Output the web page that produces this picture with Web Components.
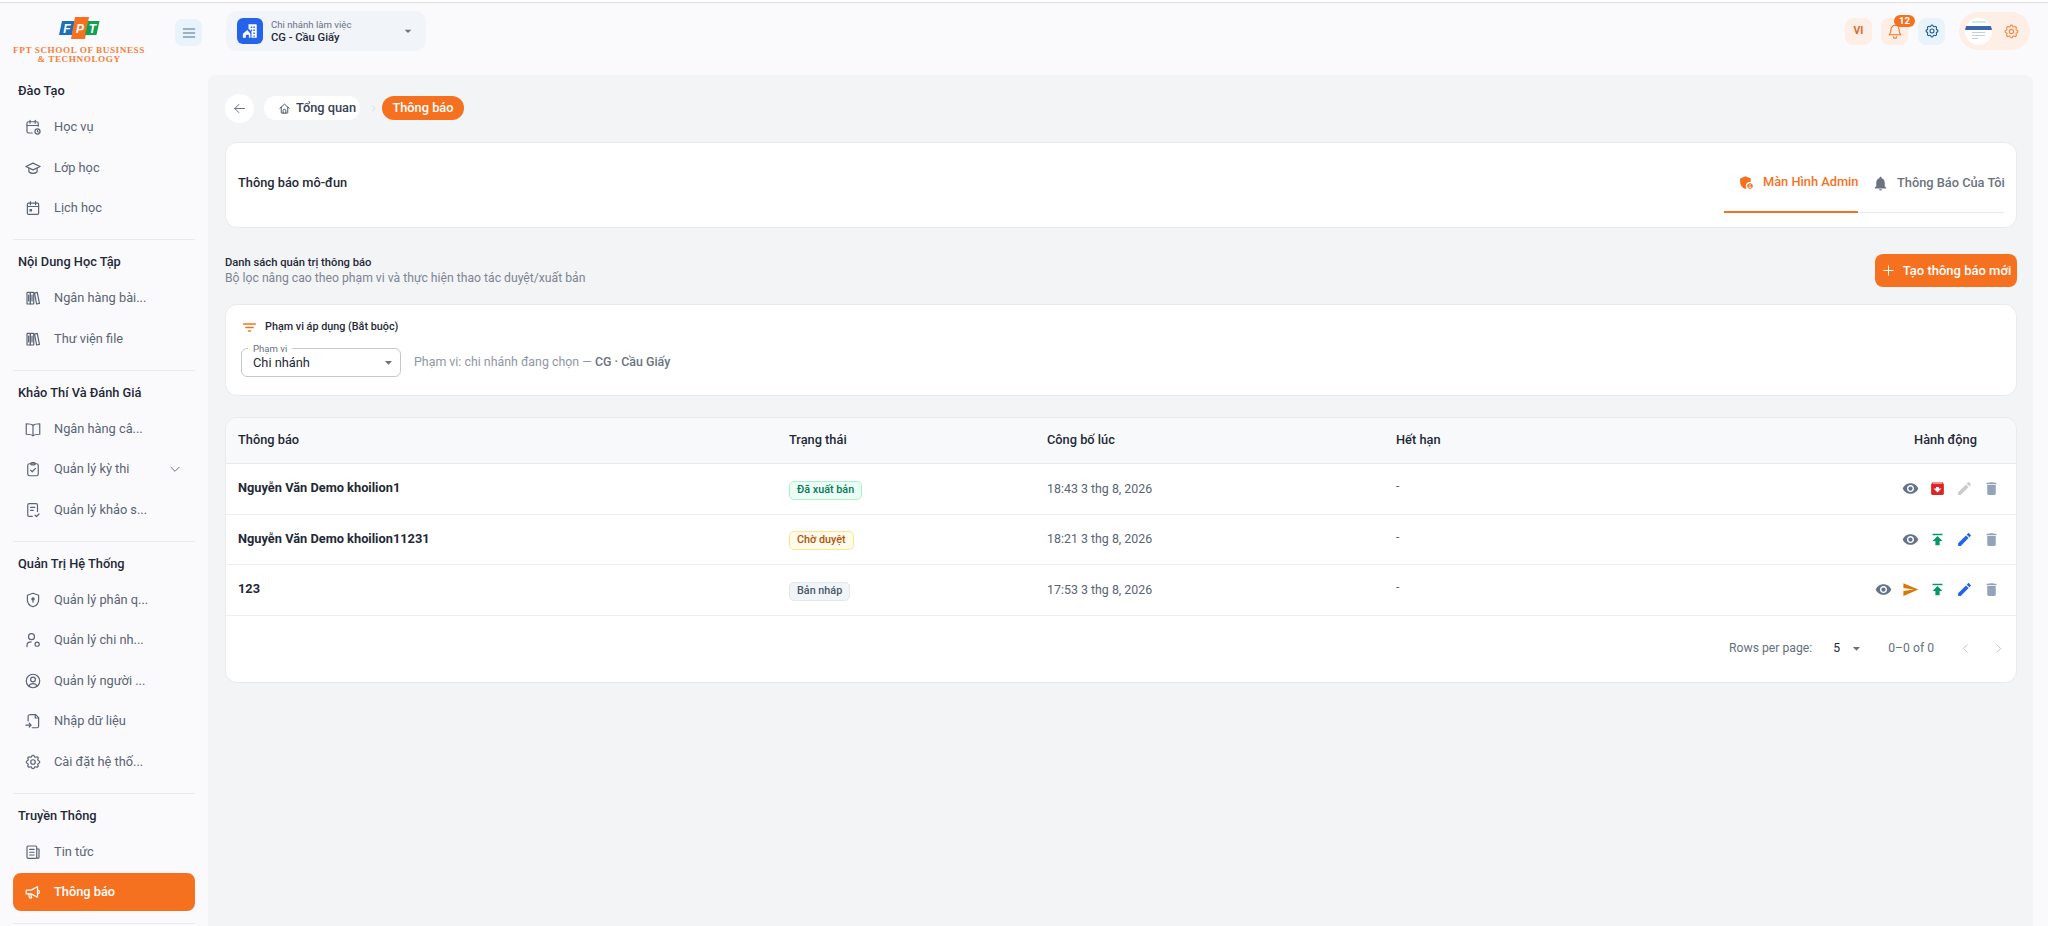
<!DOCTYPE html>
<html lang="vi"><head><meta charset="utf-8"><title>Thông báo</title>
<style>
html,body{margin:0;padding:0;height:926px;overflow:hidden;background:#fafafd;font-family:Roboto,"Noto Sans",sans-serif;color:#111827}
</style></head><body>
<x-app></x-app>
<script>
const S=(inner,extra='')=>`<svg viewBox="0 0 24 24" fill="none" stroke="currentColor" stroke-width="1.6" stroke-linecap="round" stroke-linejoin="round" ${extra}>${inner}</svg>`;
const F=(d)=>`<svg viewBox="0 0 24 24" fill="currentColor"><path d="${d}"/></svg>`;
const GEAR='<path d="M10.325 4.317c.426-1.756 2.924-1.756 3.35 0a1.724 1.724 0 0 0 2.573 1.066c1.543-.94 3.31.826 2.37 2.37a1.724 1.724 0 0 0 1.065 2.572c1.756.426 1.756 2.924 0 3.35a1.724 1.724 0 0 0-1.066 2.573c.94 1.543-.826 3.31-2.37 2.37a1.724 1.724 0 0 0-2.572 1.065c-.426 1.756-2.924 1.756-3.35 0a1.724 1.724 0 0 0-2.573-1.066c-1.543.94-3.31-.826-2.37-2.37a1.724 1.724 0 0 0-1.065-2.572c-1.756-.426-1.756-2.924 0-3.35a1.724 1.724 0 0 0 1.066-2.573c-.94-1.543.826-3.31 2.37-2.37.996.608 2.296.07 2.572-1.065z"/><circle cx="12" cy="12" r="3"/>';
const ICONS={
 calclock:S('<path d="M11 20H6a2 2 0 0 1-2-2V7a2 2 0 0 1 2-2h11a2 2 0 0 1 2 2v4"/><path d="M8 3v4M15 3v4M4 10h15"/><circle cx="18" cy="18" r="3.4"/><path d="M18 16.6V18l1 .7"/>'),
 grad:S('<path d="M2.5 10 12 5.5l9.5 4.5-9.5 4.5z"/><path d="M6.5 12.2V17c1.4 1.5 3.4 2.2 5.5 2.2s4.1-.7 5.5-2.2v-4.8"/>'),
 cal:S('<rect x="4.5" y="5.5" width="15" height="15" rx="1.6"/><path d="M8.5 3.5v4M15.5 3.5v4M4.5 10h15"/><rect x="8" y="14" width="2" height="2" fill="currentColor"/>'),
 books:S('<rect x="4" y="4.5" width="4.5" height="15.5" rx=".8"/><rect x="8.5" y="4.5" width="4.5" height="15.5" rx=".8"/><path d="M14 5.5l3.6-1 3 14.6-3.8.9z"/><path d="M6.2 8v8M10.7 8v8"/>'),
 book:S('<path d="M12 7c-1.6-1.3-4-2-9-2v14c5 0 7.4.6 9 2 1.6-1.4 4-2 9-2V5c-5 0-7.4.7-9 2z"/><path d="M12 7v14"/>'),
 clip:S('<rect x="5" y="5" width="14" height="16" rx="2.2"/><path d="M9 5a1.6 1.6 0 0 1 1.6-1.7h2.8A1.6 1.6 0 0 1 15 5a1.4 1.4 0 0 1-1.4 1.4h-3.2A1.4 1.4 0 0 1 9 5z"/><path d="m8.8 13.5 2.2 2.2 4.2-4.6"/>'),
 filecheck:S('<path d="M11 20.5H7a2 2 0 0 1-2-2v-13a2 2 0 0 1 2-2h9a2 2 0 0 1 2 2V14"/><path d="M8.8 8.5h5.5M8.8 12.5h3.5"/><path d="m14.8 19 1.8 1.7 3.4-3.4"/>'),
 shield:S('<path d="M12 3 4.5 5.6v6c0 4.4 3 8 7.5 9.4 4.500-1.400 7.500-5 7.500-9.400v-6z"/><circle cx="12" cy="10.500" r="1.500" fill="currentColor"/><path d="M12 12v3"/>'),
 userdot:S('<circle cx="10" cy="7.500" r="4"/><path d="M4 21v-1.500c0-3 2.500-5 5.500-5"/><circle cx="17.500" cy="17.500" r="2.800"/>'),
 usercircle:S('<circle cx="12" cy="12" r="9"/><circle cx="12" cy="10" r="3.200"/><path d="M6.500 18.800c1-2.300 3-3.300 5.500-3.300s4.500 1 5.500 3.300"/>'),
 fileimp:S('<path d="M8 3.500h7.500l4 4V19a2 2 0 0 1-2 2H11"/><path d="M15 3.500V8h4.500"/><path d="M7 3.700A2 2 0 0 0 5.500 5.500V12"/><path d="M2.500 17.500h7M7 15l2.500 2.500L7 20"/>'),
 gear:S(GEAR),
 news:S('<rect x="4" y="4" width="13" height="16.500" rx="1.500"/><path d="M17 8h3v11a1.500 1.500 0 0 1-3 0M7.500 8.500h6M7.500 12.300h6M7.500 16h6"/>'),
 mega:S('<path d="M3 9.500h6.500L18 5v14l-8.500-4.500H3z"/><path d="M6 14.500 7.500 20h2.700L9 14.800"/><path d="M18 9.500a2.500 2.500 0 0 1 0 5"/>'),
 home:S('<path d="M3.500 11.500 12 4l8.500 7.500"/><path d="M6 10v9.500a1 1 0 0 0 1 1h10a1 1 0 0 0 1-1V10"/><path d="M9.500 20.500V16a2.500 2.500 0 0 1 5 0v4.500"/>'),
 back:S('<path d="M20 12H4.500M11 5.500 4.500 12l6.500 6.500"/>'),
 right:S('<path d="m9 5 7 7-7 7"/>'),
 left:S('<path d="m15 5-7 7 7 7"/>'),
 down:S('<path d="m5 9 7 7 7-7"/>'),
 belloutline:S('<path d="M12 3.500a6 6 0 0 1 6 6c0 5 2 7 2.500 8h-17c.5-1 2.500-3 2.500-8a6 6 0 0 1 6-6z"/><path d="M9.500 20.500a2.500 2.500 0 0 0 5 0"/>'),
 menu:S('<path d="M3.500 6h17M3.500 12h17M3.500 18h17"/>'),
 plus:S('<path d="M12 4.500v15M4.500 12h15"/>'),
 bell:F('M12 22c1.100 0 2-.9 2-2h-4c0 1.100.89 2 2 2zm6-6v-5c0-3.070-1.640-5.640-4.500-6.320V4c0-.83-.67-1.500-1.500-1.500s-1.500.67-1.500 1.500v.68C7.630 5.360 6 7.920 6 11v5l-2 2v1h16v-1l-2-2z'),
 admin:F('M17 11c.34 0 .67.04 1 .09V6.270L10.500 3 3 6.270v4.910c0 4.540 3.200 8.790 7.500 9.820.55-.13 1.080-.32 1.600-.55-.69-.98-1.100-2.170-1.100-3.450 0-3.310 2.690-6 6-6zM17 13c-2.210 0-4 1.790-4 4s1.790 4 4 4 4-1.790 4-4-1.790-4-4-4zm0 1.380c.62 0 1.120.51 1.120 1.120s-.51 1.120-1.120 1.120-1.120-.51-1.120-1.120.5-1.120 1.120-1.120zm0 5.370c-.93 0-1.740-.46-2.240-1.170.05-.72 1.510-1.080 2.240-1.080s2.190.36 2.240 1.080c-.5.71-1.310 1.170-2.240 1.170z'),
 filter:F('M10 18h4v-2h-4v2zM3 6v2h18V6H3zm3 7h12v-2H6v2z'),
 eye:F('M12 4.500C7 4.500 2.730 7.610 1 12c1.730 4.390 6 7.500 11 7.500s9.270-3.110 11-7.500c-1.730-4.390-6-7.500-11-7.500zM12 17c-2.760 0-5-2.240-5-5s2.240-5 5-5 5 2.240 5 5-2.240 5-5 5zm0-8c-1.660 0-3 1.340-3 3s1.340 3 3 3 3-1.340 3-3-1.340-3-3-3z'),
 edit:F('M3 17.250V21h3.750L17.810 9.940l-3.750-3.750L3 17.250zM20.710 7.040c.39-.39.39-1.020 0-1.410l-2.340-2.340c-.39-.39-1.020-.39-1.410 0l-1.830 1.830 3.750 3.750 1.830-1.830z'),
 del:F('M6 19c0 1.100.9 2 2 2h8c1.100 0 2-.9 2-2V7H6v12zM19 4h-3.500l-1-1h-5l-1 1H5v2h14V4z'),
 publish:F('M5 4v2h14V4H5zm0 10h4v6h6v-6h4l-7-7-7 7z'),
 send:F('M2.010 21L23 12 2.010 3 2 10l15 2-15 2z'),
 archive:F('M20.540 5.230l-1.390-1.680C18.880 3.210 18.470 3 18 3H6c-.47 0-.88.21-1.160.55L3.460 5.230C3.170 5.570 3 6.020 3 6.500V19c0 1.100.9 2 2 2h14c1.100 0 2-.9 2-2V6.500c0-.48-.17-.93-.46-1.270zM12 17.500L6.500 12H10v-2h4v2h3.500L12 17.500zM5.120 5l.81-1h12.130l.94 1H5.120z'),
 caret:F('M7 10l5 5 5-5z'),
 building:F('M10 3h10a1 1 0 0 1 1 1v17h-7v-8.600L10 9zM13 6v2h2V6zm3.500 0v2h2V6zM13 10v2h2v-2zm3.500 0v2h2v-2zm0 4v2h2v-2zm0 4v1.500h2V18zM8.500 10.500 2.500 15.500V21h4v-4h4v4h2v-5.500z')
};
function def(name,css,html,init){
  customElements.define(name,class extends HTMLElement{
    connectedCallback(){
      if(this.shadowRoot)return;
      const r=this.attachShadow({mode:'open'});
      r.innerHTML=`<style>${css}</style>`+(typeof html==='function'?html(this):html);
      if(init)init(this,r);
    }
  });
}
def('x-icon',':host{display:inline-flex;width:var(--s,18px);height:var(--s,18px);flex:none;color:inherit}svg{width:100%;height:100%;display:block}',e=>ICONS[e.getAttribute('name')]||'');

def('x-logo',`:host{display:flex;flex-direction:column;align-items:center;width:128px}
 svg{display:block;width:42px;height:24px}
 .t{font:700 9.2px/9px "Liberation Serif",serif;letter-spacing:.55px;color:#f5813a;text-align:center;margin-top:6px;white-space:nowrap}`,
 `<svg viewBox="0 0 42 24"><path d="M4 5h13l-3 14H1z" fill="#1c6fb8"/><path d="M17 1h14l-4 22H13z" fill="#f5711f"/><path d="M30 5h11.500l-3 14H27z" fill="#12a150"/>
 <text x="9" y="16.500" font-family="Liberation Sans" font-size="12" font-weight="700" font-style="italic" fill="#fff" text-anchor="middle">F</text>
 <text x="22" y="16.500" font-family="Liberation Sans" font-size="12" font-weight="700" font-style="italic" fill="#fff" text-anchor="middle">P</text>
 <text x="34.500" y="16.500" font-family="Liberation Sans" font-size="12" font-weight="700" font-style="italic" fill="#fff" text-anchor="middle">T</text></svg>
 <div class="t">FPT SCHOOL OF BUSINESS<br>&amp; TECHNOLOGY</div>`);

def('x-nav-group',`:host{display:block;margin:0 13px;padding:12px 0 12px;border-bottom:1px solid #e9eaee}
 h3{margin:0 0 7px;padding-left:5px;font:500 12.800px/20px Roboto,sans-serif;color:#1f2937;white-space:nowrap}
 .l{display:flex;flex-direction:column;gap:2.500px}`,
 e=>`<h3>${e.getAttribute('label')}</h3><div class="l"><slot></slot></div>`);

def('x-nav-item',`:host{display:flex;align-items:center;height:38px;border-radius:8px;color:#5b6473;padding-left:11px;box-sizing:border-box;position:relative;--s:18px;font:400 12.800px/18px Roboto,sans-serif}
 :host([active]){background:#f5711f;color:#fff;font-weight:500}
 .tx{margin-left:12px;white-space:nowrap}
 .c{position:absolute;right:13px;--s:14px;top:12px}`,
 e=>`<x-icon name="${e.getAttribute('icon')}"></x-icon><span class="tx"><slot></slot></span>${e.hasAttribute('expand')?'<x-icon class="c" name="down"></x-icon>':''}`);

def('x-sidebar',`:host{display:block;width:208px;flex:none;overflow:hidden}
 .h{height:66px;box-sizing:border-box;display:flex;padding:13px 6px 0 15px;align-items:flex-start;justify-content:space-between}
 .b{width:27px;height:27px;border-radius:7px;background:#e8f3fb;color:#52708f;display:flex;align-items:center;justify-content:center;--s:16px;margin-top:3px}`,
 `<div class="h"><x-logo></x-logo><div class="b"><x-icon name="menu"></x-icon></div></div><slot></slot>`);

def('x-branch',`:host{display:flex;align-items:center;width:200px;height:40px;border-radius:11px;background:#f1f4f9;box-sizing:border-box;padding:0 11px;position:relative}
 .i{width:26px;height:26px;border-radius:6px;background:#2563eb;color:#fff;display:flex;align-items:center;justify-content:center;--s:18px}
 .t{margin-left:8px;display:flex;flex-direction:column}
 .a{font:400 9.600px/11px Roboto,sans-serif;color:#6b7280}
 .v{font:500 11.200px/13px Roboto,sans-serif;color:#1f2937;margin-top:1px}
 .c{position:absolute;right:10px;top:12px;--s:16px;color:#6b7280}`,
 `<div class="i"><x-icon name="building"></x-icon></div><div class="t"><span class="a">Chi nhánh làm việc</span><span class="v">CG - Cầu Giấy</span></div><x-icon class="c" name="caret"></x-icon>`);

def('x-box-btn',`:host{display:flex;width:27px;height:27px;border-radius:8px;align-items:center;justify-content:center;background:var(--bg,#fdeee6);color:var(--fg,#f5711f);position:relative;--s:16px;font:700 10.400px/1 Roboto,sans-serif}
 .badge{position:absolute;left:13px;top:-3px;height:12px;min-width:21px;border-radius:6px;background:#f5711f;color:#fff;font:700 9.600px/12px Roboto,sans-serif;text-align:center}`,
 e=>`<slot></slot>${e.getAttribute('badge')?`<span class="badge">${e.getAttribute('badge')}</span>`:''}`);

def('x-avatar-pill',`:host{display:flex;align-items:center;width:71px;height:38px;border-radius:19px;background:#fdeee6;box-sizing:border-box;padding-left:6px;color:#f58a47;--s:17px}
 .a{width:27px;height:27px;border-radius:50%;background:#fff;overflow:hidden;display:flex;flex-direction:column;align-items:center;flex:none}
 .g{width:14px;height:2px;background:#cfeedd;margin-top:3px}
 .bl{width:100%;height:4px;background:#3f62ad;margin-top:3px}
 .ln{width:13px;height:1px;background:#c8ccd3;margin-top:2px;align-self:flex-start;margin-left:7px}
 x-icon{margin-left:11px}`,
 `<div class="a"><i class="g"></i><i class="bl"></i><i class="ln"></i><i class="ln"></i><i class="ln" style="width:6px"></i></div><x-icon name="gear"></x-icon>`);

def('x-topbar',`:host{display:flex;align-items:center;height:72px;box-sizing:border-box;padding:0 18px 16px 18px;justify-content:space-between;flex:none}
 .r{display:flex;align-items:center}`,
 `<x-branch></x-branch><div class="r"><x-box-btn style="color:#d9692c">VI</x-box-btn><x-box-btn badge="12" style="margin-left:9px"><x-icon name="belloutline"></x-icon></x-box-btn><x-box-btn style="margin-left:10px;--bg:#e8f3fb;--fg:#1f5a8c"><x-icon name="gear"></x-icon></x-box-btn><x-avatar-pill style="margin-left:14px"></x-avatar-pill></div>`);

def('x-crumbs',`:host{display:flex;align-items:center;height:30px;font:500 12.800px/1 Roboto,sans-serif}
 .bk{width:29px;height:29px;border-radius:50%;background:#fff;color:#6b7280;display:flex;align-items:center;justify-content:center;--s:15px}
 .p{height:24px;border-radius:12px;display:flex;align-items:center;white-space:nowrap}
 .h{background:#fff;color:#374151;width:96px;margin-left:10px;padding-left:14px;box-sizing:border-box;--s:13px}
 .h span{margin-left:5px}
 .s{--s:9px;color:#c5c9d0;margin:0 4px 0 9px}
 .a{background:#f5711f;color:#fff;width:82px;justify-content:center}`,
 `<div class="bk"><x-icon name="back"></x-icon></div><div class="p h"><x-icon name="home"></x-icon><span>Tổng quan</span></div><x-icon class="s" name="right"></x-icon><div class="p a">Thông báo</div>`);

def('x-card',`:host{display:block;background:#fff;border:1px solid #e8eaee;border-radius:12px;box-sizing:border-box}`,`<slot></slot>`);

def('x-tabs-head',`:host{display:flex;height:84px;align-items:flex-start;box-sizing:border-box;padding:10px 12px 0 12px;justify-content:space-between}
 .ttl{font:500 12.800px/60px Roboto,sans-serif;color:#1f2937}
 .tabs{display:flex;border-bottom:1px solid #e5e7eb;height:60px;width:280px;box-sizing:border-box;font:500 12.800px/1 Roboto,sans-serif;--s:17px}
 .t{display:flex;align-items:center;box-sizing:border-box;padding-left:14px;height:60px;white-space:nowrap}
 .t span{margin-left:8px}
 .on{width:134px;color:#f5711f;border-bottom:2px solid #f5711f}
 .off{color:#6b7280;padding-left:14px}`,
 `<div class="ttl">Thông báo mô-đun</div><div class="tabs"><div class="t on"><x-icon name="admin"></x-icon><span>Màn Hình Admin</span></div><div class="t off"><x-icon name="bell"></x-icon><span>Thông Báo Của Tôi</span></div></div>`);

def('x-section-head',`:host{display:flex;justify-content:space-between;align-items:center;height:33px;margin-top:26px}
 .a{font:500 11.200px/14px Roboto,sans-serif;color:#1f2937}
 .b{font:400 12.200px/16px Roboto,sans-serif;color:#7d8592}
 .btn{width:142px;height:33px;border-radius:8px;background:#f5711f;color:#fff;display:flex;align-items:center;justify-content:center;font:500 13px/1 Roboto,sans-serif;--s:15px}
 .btn span{margin-left:7px}`,
 `<div><div class="a">Danh sách quản trị thông báo</div><div class="b">Bộ lọc nâng cao theo phạm vi và thực hiện thao tác duyệt/xuất bản</div></div><div class="btn"><x-icon name="plus"></x-icon><span>Tạo thông báo mới</span></div>`);

def('x-filter',`:host{display:block;padding:14px 15px 0 15px;height:90px;box-sizing:border-box}
 .h{display:flex;align-items:center;height:17px;color:#f5711f;--s:17px;font:500 10.800px/1 Roboto,sans-serif}
 .h span{color:#1f2937;margin-left:7px}
 .r{display:flex;align-items:center;margin-top:12px}
 .sel{width:160px;height:29px;border:1px solid #c4c7cc;border-radius:6px;box-sizing:border-box;position:relative;font:400 12.800px/27px Roboto,sans-serif;color:#1f2937;padding-left:11px}
 .lb{position:absolute;left:6px;top:-6px;background:#fff;padding:0 5px;font:400 9.600px/11px Roboto,sans-serif;color:#6b7280}
 .cr{position:absolute;right:3px;top:5px;--s:17px;color:#6b7280}
 .tx{margin-left:13px;font:400 12.400px/1 Roboto,sans-serif;color:#9097a3}
 b{font-weight:500;color:#6b7280}`,
 `<div class="h"><x-icon name="filter"></x-icon><span>Phạm vi áp dụng (Bắt buộc)</span></div><div class="r"><div class="sel"><span class="lb">Phạm vi</span>Chi nhánh<x-icon class="cr" name="caret"></x-icon></div><div class="tx">Phạm vi: chi nhánh đang chọn — <b>CG · Cầu Giấy</b></div></div>`);

const GRID='grid-template-columns:551px 258px 349px 1fr';
def('x-thead',`:host{display:grid;${GRID};height:45px;align-items:center;background:#f8f9fb;border-bottom:1px solid #e8eaee;border-radius:12px 12px 0 0;font:500 12.800px/1 Roboto,sans-serif;color:#1f2937;padding-left:12px}
 .e{text-align:right;padding-right:19px}`,
 `<div>Thông báo</div><div>Trạng thái</div><div>Công bố lúc</div><div></div>`,
 (e,r)=>{r.lastElementChild.textContent='Hết hạn';r.lastElementChild.style.cssText='position:static';
   const g=document.createElement('div');g.className='e';g.textContent='Hành động';g.style.cssText='position:absolute;right:20px';r.appendChild(g);e.style.position='relative';});

def('x-chip',`:host{display:inline-flex;align-items:center;height:19px;padding:0 7px;border-radius:5px;box-sizing:border-box;border:1px solid;font:500 10.800px/1 Roboto,sans-serif;white-space:nowrap}
 :host([kind=ok]){background:#ecfdf5;border-color:#a7f3d0;color:#047857}
 :host([kind=wait]){background:#fffbeb;border-color:#fde68a;color:#b45309}
 :host([kind=draft]){background:#f1f5f9;border-color:#e2e8f0;color:#475569}`,`<slot></slot>`);

def('x-row',`:host{display:grid;${GRID};height:50.500px;align-items:center;border-bottom:1px solid #eceef1;box-sizing:border-box;padding-left:12px;position:relative}
 .n{font:700 12.800px/1 Roboto,sans-serif;color:#1f2937}
 .d{font:400 12.400px/1 Roboto,sans-serif;color:#5b6473}
 .act{display:flex;justify-content:flex-end;padding-right:11px;--s:17px}
 .act ::slotted(x-act){}`,
 e=>`<div class="n">${e.getAttribute('name')}</div><div><slot name="chip"></slot></div><div class="d">${e.getAttribute('date')}</div><div style="display:flex;justify-content:space-between"><span class="d">-</span><div class="act"><slot></slot></div></div>`);

def('x-act',`:host{display:flex;width:27px;justify-content:center;--s:17px;color:var(--c,#64748b)}`,e=>`<x-icon name="${e.getAttribute('icon')}"></x-icon>`);

def('x-pager',`:host{display:flex;height:66px;align-items:center;justify-content:flex-end;font:400 12.200px/1 Roboto,sans-serif;color:#667080;padding:0 11px 0 0}
 .c{--s:17px;color:#6b7280;margin:0 5px 0 0}
 .n{margin-left:21px;color:#1f2937;width:15px}
 .p{margin-left:18px}
 .nv{--s:13px;color:#b4b8be;margin-left:20px}`,
 `<span>Rows per page:</span><span class="n">5</span><x-icon class="c" name="caret"></x-icon><span class="p">0–0 of 0</span><x-icon class="nv" name="left" style="margin-left:25px"></x-icon><x-icon class="nv" name="right"></x-icon>`);

def('x-main',`:host{display:block;flex:1;background:#f3f4f6;border-radius:8px 8px 0 0;margin-right:15px;padding:18px 16px 0 17px;box-sizing:border-box;overflow:hidden;min-height:0}`,`<slot></slot>`);

def('x-app',`:host{display:block;height:926px;overflow:hidden}
 .line{height:2px;background:#fff;border-bottom:1px solid #e0e0e2}
 .w{display:flex;height:923px}
 .r{flex:1;min-width:0;display:flex;flex-direction:column}`,
 `<div class="line"></div><div class="w"><x-sidebar>
 <x-nav-group label="Đào Tạo"><x-nav-item icon="calclock">Học vụ</x-nav-item><x-nav-item icon="grad">Lớp học</x-nav-item><x-nav-item icon="cal">Lịch học</x-nav-item></x-nav-group>
 <x-nav-group label="Nội Dung Học Tập"><x-nav-item icon="books">Ngân hàng bài...</x-nav-item><x-nav-item icon="books">Thư viện file</x-nav-item></x-nav-group>
 <x-nav-group label="Khảo Thí Và Đánh Giá"><x-nav-item icon="book">Ngân hàng câ...</x-nav-item><x-nav-item icon="clip" expand>Quản lý kỳ thi</x-nav-item><x-nav-item icon="filecheck">Quản lý khảo s...</x-nav-item></x-nav-group>
 <x-nav-group label="Quản Trị Hệ Thống"><x-nav-item icon="shield">Quản lý phân q...</x-nav-item><x-nav-item icon="userdot">Quản lý chi nh...</x-nav-item><x-nav-item icon="usercircle">Quản lý người ...</x-nav-item><x-nav-item icon="fileimp">Nhập dữ liệu</x-nav-item><x-nav-item icon="gear">Cài đặt hệ thố...</x-nav-item></x-nav-group>
 <x-nav-group label="Truyền Thông"><x-nav-item icon="news">Tin tức</x-nav-item><x-nav-item icon="mega" active>Thông báo</x-nav-item></x-nav-group>
 </x-sidebar><div class="r"><x-topbar></x-topbar><x-main>
 <x-crumbs></x-crumbs>
 <x-card style="margin-top:19px"><x-tabs-head></x-tabs-head></x-card>
 <x-section-head></x-section-head>
 <x-card style="margin-top:17px"><x-filter></x-filter></x-card>
 <x-card style="margin-top:21px"><x-thead></x-thead>
  <x-row name="Nguyễn Văn Demo khoilion1" date="18:43 3 thg 8, 2026"><x-chip slot="chip" kind="ok">Đã xuất bản</x-chip><x-act icon="eye"></x-act><x-act icon="archive" style="--c:#dc2626"></x-act><x-act icon="edit" style="--c:#c9cbce"></x-act><x-act icon="del" style="--c:#94a3b8"></x-act></x-row>
  <x-row name="Nguyễn Văn Demo khoilion11231" date="18:21 3 thg 8, 2026"><x-chip slot="chip" kind="wait">Chờ duyệt</x-chip><x-act icon="eye"></x-act><x-act icon="publish" style="--c:#059669"></x-act><x-act icon="edit" style="--c:#2563eb"></x-act><x-act icon="del" style="--c:#94a3b8"></x-act></x-row>
  <x-row name="123" date="17:53 3 thg 8, 2026"><x-chip slot="chip" kind="draft">Bản nháp</x-chip><x-act icon="eye"></x-act><x-act icon="send" style="--c:#d97706"></x-act><x-act icon="publish" style="--c:#059669"></x-act><x-act icon="edit" style="--c:#2563eb"></x-act><x-act icon="del" style="--c:#94a3b8"></x-act></x-row>
  <x-pager></x-pager></x-card>
 </x-main></div></div>`);
</script></body></html>
